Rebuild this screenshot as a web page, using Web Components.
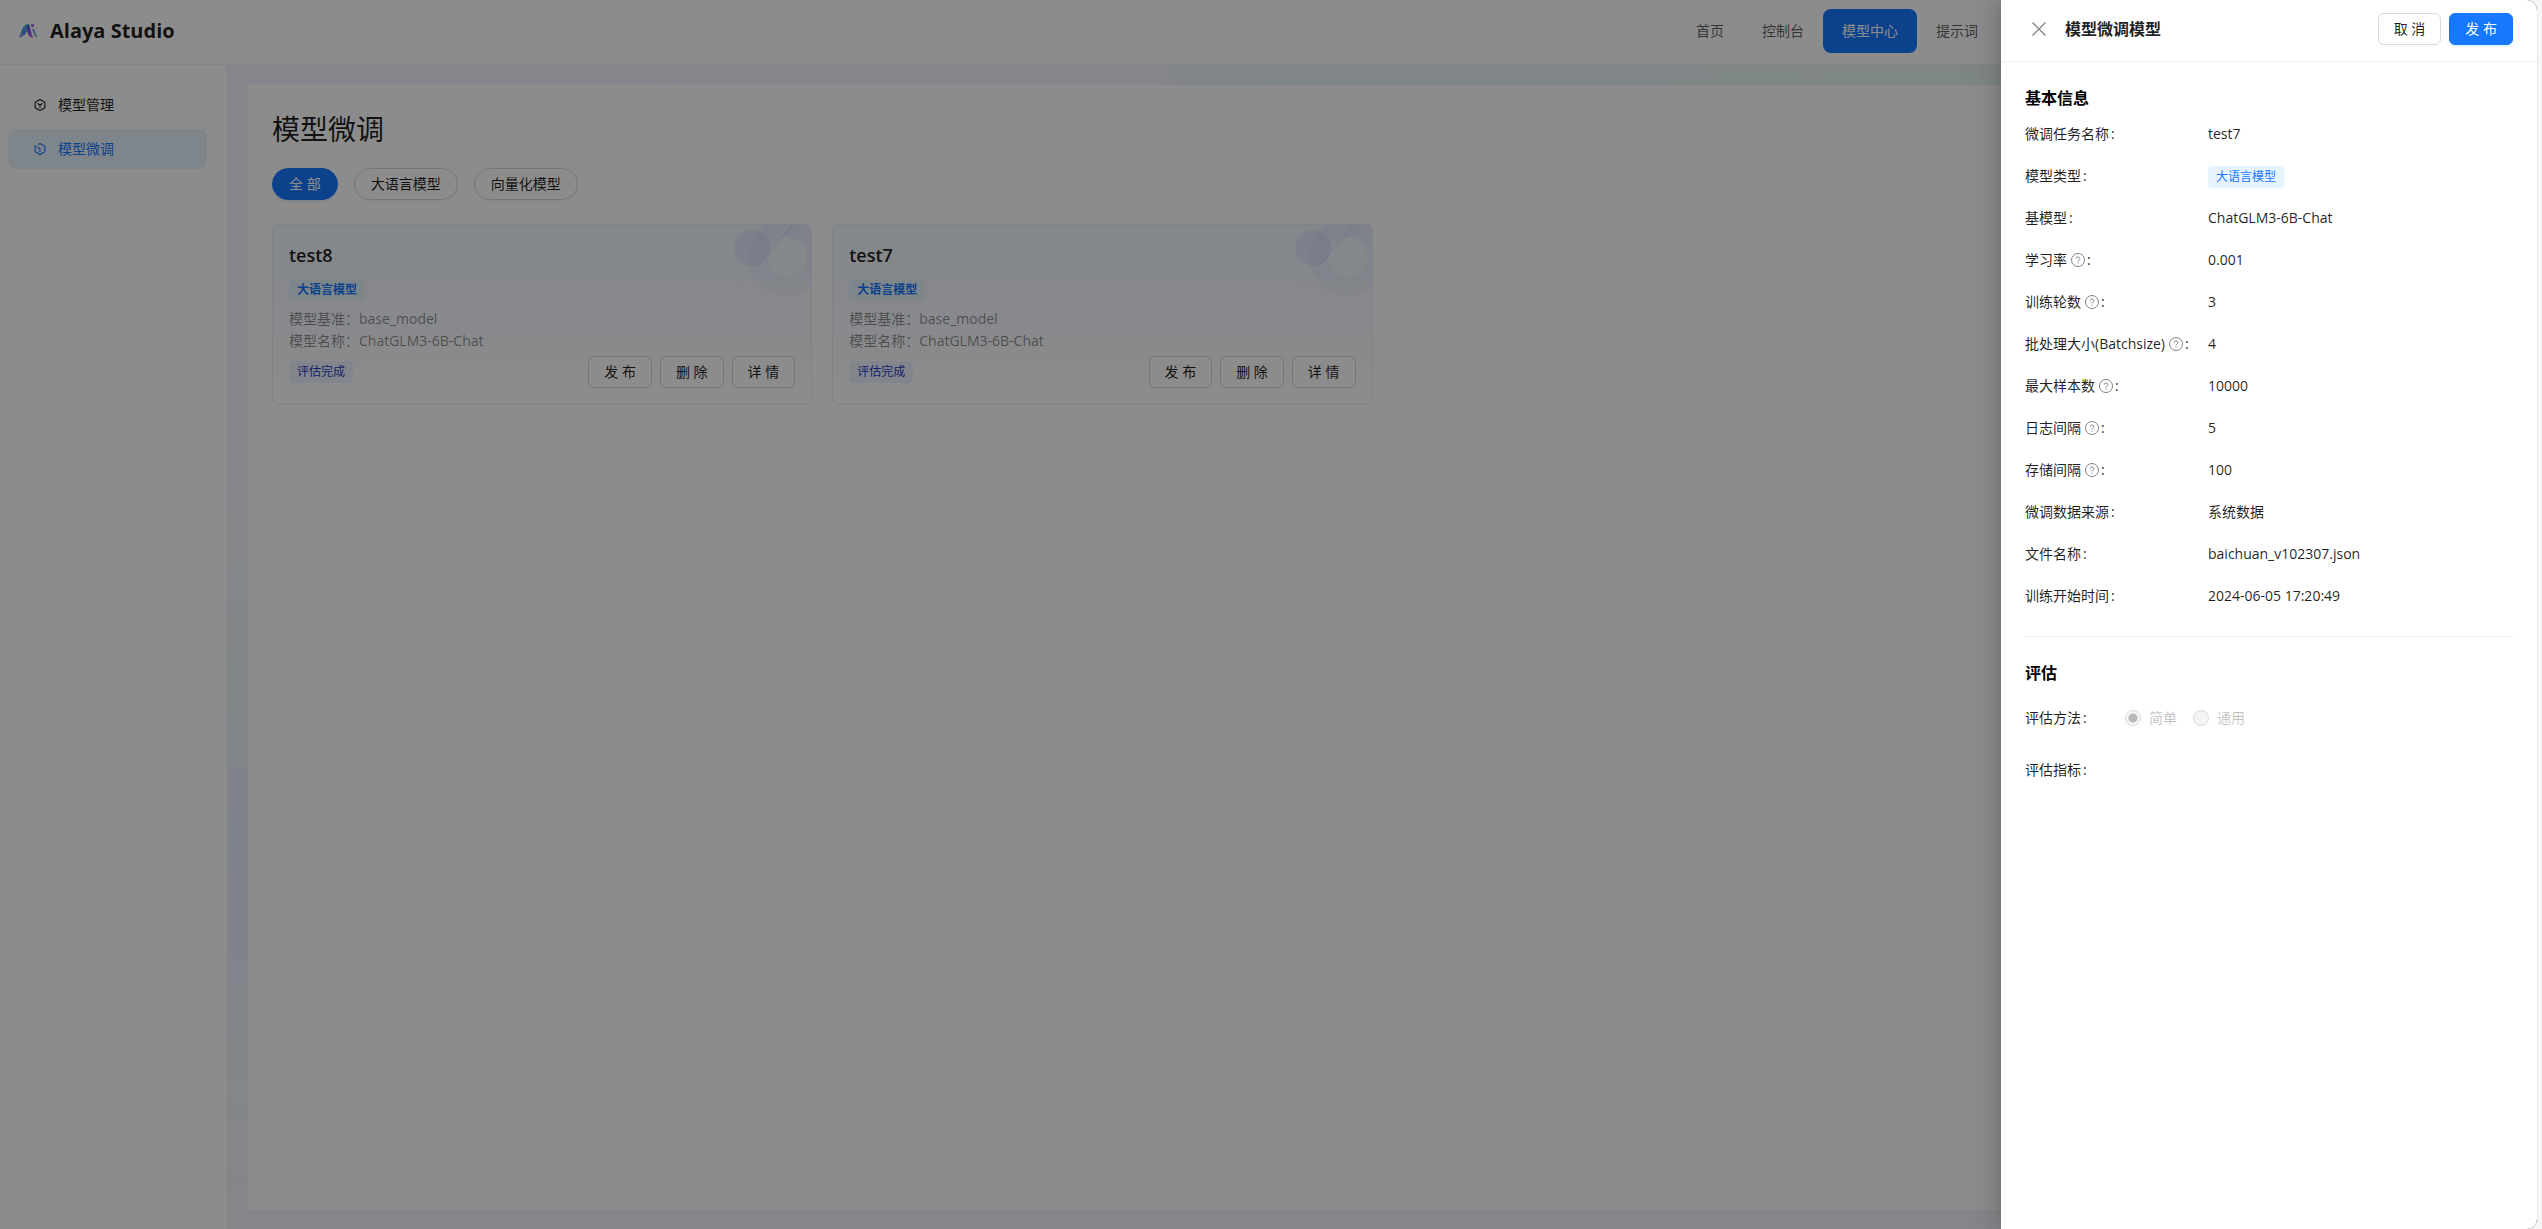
<!DOCTYPE html>
<html lang="zh-CN">
<head>
<meta charset="utf-8">
<title>Alaya Studio</title>
<style>
html,body{margin:0;height:100%}
body{font-family:"Open Sans","Noto Sans CJK SC",sans-serif;font-size:14px;line-height:22px;color:rgba(0,0,0,.88);background:#f7f7f7}
</style>
</head>
<body>
<alaya-app></alaya-app>
<script>
function define(name, html, setup){
  const t=document.createElement('template');
  t.innerHTML=html;
  customElements.define(name,class extends HTMLElement{
    constructor(){
      super();
      this.attachShadow({mode:'open'}).append(t.content.cloneNode(true));
    }
    connectedCallback(){ if(setup) setup(this,this.shadowRoot); }
  });
}

define('ui-button',`<style>
:host{display:block}
button{font:inherit;line-height:22px;height:32px;padding:0 15px;margin:0;display:block;white-space:nowrap;border:1px solid #d9d9d9;border-radius:6px;background:#fff;color:rgba(0,0,0,.88);box-shadow:0 2px 0 rgba(0,0,0,.02);box-sizing:border-box;cursor:pointer}
:host([round]) button{border-radius:16px;padding:0 16px}
:host([primary]) button{background:#1677ff;border-color:#1677ff;color:#fff;box-shadow:0 2px 0 rgba(5,145,255,.1)}
</style><button type="button"><slot></slot></button>`);

define('ui-tag',`<style>
:host{display:inline-block;font-size:12px;line-height:22px;padding:0 8px;border-radius:4px;background:#e6f4ff;color:#1677ff;white-space:nowrap}
:host([tone=indigo]){background:#edf2ff;color:#1d39c4}
:host([strong]){font-weight:600}
</style><slot></slot>`);

define('app-logo',`<style>
:host{display:flex;align-items:center;gap:12px;font-size:20px;line-height:28px;font-weight:700}
svg{display:block}
</style>
<svg width="20" height="16" viewBox="0 0 20 16" aria-hidden="true">
<defs>
<linearGradient id="a" x1="0" y1="1" x2="1" y2="0"><stop offset="0" stop-color="#9fb0f4"/><stop offset=".45" stop-color="#4a90e0"/><stop offset="1" stop-color="#68d0d4"/></linearGradient>
<linearGradient id="b" x1="0" y1="0" x2="1" y2="1"><stop offset="0" stop-color="#3a40e0"/><stop offset=".5" stop-color="#8a54e8"/><stop offset="1" stop-color="#e880ec"/></linearGradient>
<linearGradient id="c" x1="0" y1="0" x2="0" y2="1"><stop offset="0" stop-color="#6a78e4"/><stop offset="1" stop-color="#5cd0c8"/></linearGradient>
</defs>
<path d="M0 14.800C3 12.500 4 1 9.500 1h2.500C10.500 4 8.500 14.800 0 14.800z" fill="url(#a)"/>
<path d="M9.500 2C11.600 2 12 4.500 13 8.500s2 5 2.600 6.300c-4 .2-5.200-2.600-6-5.800S9.200 4.600 8.600 3.600z" fill="url(#b)"/>
<path d="M14.200 5.500C17.500 6 17.500 12 20 14.200 16 14.600 15.500 9.500 14.200 5.500z" fill="url(#c)"/>
<circle cx="14.500" cy="2.500" r="1.600" fill="#9458e0"/>
</svg><span>Alaya Studio</span>`);

define('app-header',`<style>
:host{display:flex;justify-content:space-between;align-items:center;background:#fff;border-bottom:1px solid #f0f0f0;padding:0 18px 2px;box-sizing:border-box;height:65px}
nav{display:flex;margin-right:522px}
a{display:block;padding:11px 19px;border-radius:8px;color:rgba(0,0,0,.65);text-decoration:none;white-space:nowrap}
a[aria-current]{background:#1677ff;color:#fff}
</style>
<app-logo></app-logo>
<nav><a href="#home">首页</a><a href="#console">控制台</a><a href="#models" aria-current="page">模型中心</a><a href="#prompts">提示词</a></nav>`);

define('side-menu',`<style>
:host{display:block;width:228px;flex:none;box-sizing:border-box;background:#fff;border-right:1px solid #f0f0f0;padding:20px 20px 0 8px}
nav{display:flex;flex-direction:column;gap:4px}
a{display:flex;align-items:center;gap:11px;height:40px;padding-left:25px;border-radius:8px;color:rgba(0,0,0,.88);text-decoration:none}
a[aria-current]{background:#e6f4ff;color:#1677ff}
svg{width:14px;height:14px;fill:none;stroke:currentColor;stroke-width:1.100;stroke-linejoin:round}
</style>
<nav>
<a href="#manage"><svg viewBox="0 0 14 14"><path d="M7 1.600 11.900 4.200V9.800L7 12.400 2.100 9.800V4.200zM4.500 5.600 7 7l2.500-1.400M7 7v2.800"/></svg>模型管理</a>
<a href="#tune" aria-current="page"><svg viewBox="0 0 14 14"><path d="M5.200 2.500 7 1.600 11.900 4.200V9.800L7 12.400 2.100 9.800V4.200l1.200-.6M4 5 6.900 6.600v3.600"/></svg>模型微调</a>
</nav>`);

define('model-card',`<style>
:host{display:block;box-sizing:border-box;border:1px solid #eaeef5;border-radius:6px;padding:16px;background:linear-gradient(180deg,#f0f7fc 0,#f5f8ff 40%,#fbfcff 75%,#fff 90%);position:relative;overflow:hidden}
.art{position:absolute;right:0;top:0}
h2{margin:0 0 10px;font-size:18px;line-height:28px;font-weight:600}
ui-tag{display:block;width:max-content}
dl{margin:7px 0 4px;color:rgba(0,0,0,.45)}
dl div{display:flex}
dt,dd{margin:0}
footer{display:flex;justify-content:space-between;align-items:center}
.acts{display:flex;gap:8px}
</style>
<svg class="art" width="84" height="84" viewBox="0 0 84 84" aria-hidden="true">
<defs><linearGradient id="l" x1="1" y1="0" x2="0" y2="1"><stop offset="0" stop-color="#c3cffa"/><stop offset="1" stop-color="#c3cffa" stop-opacity="0"/></linearGradient>
<linearGradient id="r" x1="0" y1="0" x2="0" y2="1"><stop offset="0" stop-color="#e2e8fc"/><stop offset="1" stop-color="#edf2fc"/></linearGradient></defs>
<path d="M60-7a39 39 0 1 0 .1 0zM60 12.500a19.500 19.500 0 1 1-.1 0z" fill="url(#r)" fill-opacity=".8" fill-rule="evenodd"/>
<circle cx="25" cy="23" r="18" fill="#d3dcfa" fill-opacity=".5"/>
<path d="M66 0 3 72" stroke="url(#l)"/>
</svg>
<h2></h2>
<ui-tag strong>大语言模型</ui-tag>
<dl><div><dt>模型基准：</dt><dd>base_model</dd></div><div><dt>模型名称：</dt><dd>ChatGLM3-6B-Chat</dd></div></dl>
<footer><ui-tag tone="indigo">评估完成</ui-tag><div class="acts"><ui-button>发 布</ui-button><ui-button>删 除</ui-button><ui-button>详 情</ui-button></div></footer>`,
(el,r)=>{r.querySelector('h2').textContent=el.getAttribute('name')});

define('tune-page',`<style>
:host{display:block;flex:1;padding:20px 20px 19px;background:linear-gradient(90deg,#f3f5fe 0,#f3f4fc 37%,#ebf4f8 46%,#eaf4f7 60%,#e6f6f2 72%,#e8f2f8 100%) top/100% 20px no-repeat,linear-gradient(180deg,#f3f5fe 0,#f3f5fd 35%,#ebf5f9 54%,#e8eefc 66%,#eaf0fc 76%,#eef6f9 88%,#f4f3fa 97%)}
section{height:100%;box-sizing:border-box;background:#fff;padding:24px}
h1{margin:0;font-size:28px;line-height:40px;font-weight:400}
.filters{display:flex;gap:16px;margin:19px 0 24px}
.grid{display:grid;grid-template-columns:repeat(4,1fr);gap:20px}
</style>
<section>
<h1>模型微调</h1>
<div class="filters"><ui-button round primary>全 部</ui-button><ui-button round>大语言模型</ui-button><ui-button round>向量化模型</ui-button></div>
<div class="grid"><model-card name="test8"></model-card><model-card name="test7"></model-card></div>
</section>`);

define('info-row',`<style>
:host{display:flex;align-items:center;height:22px;white-space:nowrap}
.label{display:flex;align-items:center;width:183px}
svg{display:none;margin-left:4px}
:host([help]) svg{display:block}
.c{margin-left:2px}
</style>
<span class="label"><span class="t"></span><svg width="14" height="14" viewBox="0 0 14 14" fill="none" stroke="#808080" aria-hidden="true"><circle cx="7" cy="7" r="6.500"/><path d="M5.200 5.700C5.200 3.400 8.900 3.500 8.900 5.600 8.900 7 7 6.900 7 8.500M7 9.600v1.100"/></svg><span class="c">:</span></span><span class="value"><slot></slot></span>`,
(el,r)=>{r.querySelector('.t').textContent=el.getAttribute('label')});

define('eval-method',`<style>
:host{display:block}
fieldset{border:0;margin:0;padding:0;display:flex;align-items:center;height:32px;gap:16px}
legend{float:left;padding:0;width:84px}
legend span{margin-left:2px}
label{display:flex;align-items:center;gap:8px;color:rgba(0,0,0,.25)}
input{appearance:none;width:16px;height:16px;margin:0;border:1px solid #d9d9d9;border-radius:50%;background:#f5f5f5}
input:checked{background:radial-gradient(circle,#b8b8b8 0 4px,#f5f5f5 5px)}
</style>
<fieldset><legend>评估方法<span>:</span></legend>
<label><input type="radio" name="m" checked disabled>简单</label>
<label><input type="radio" name="m" disabled>通用</label></fieldset>`);

define('detail-drawer',`<style>
:host{display:flex;flex-direction:column;width:536px;height:100%;box-sizing:border-box;background:#fff;border-radius:0 10px 10px 0;box-shadow:-6px 0 16px 0 rgba(0,0,0,.08),-3px 0 6px -4px rgba(0,0,0,.12),-9px 0 28px 8px rgba(0,0,0,.05)}
header{display:flex;align-items:center;height:62px;box-sizing:border-box;padding:0 24px 4px 30px;border-bottom:1px solid #f0f0f0}
.close{border:0;background:none;padding:0;margin:0 18px 0 0;width:16px;height:16px;color:#8c8c8c}
.close svg{display:block}
h2{margin:0;flex:1;font-size:16px;line-height:24px;font-weight:600}
.acts{display:flex;gap:8px}
.body{padding:24px}
h3{margin:0;font-size:16px;line-height:24px;font-weight:700;color:#000}
.rows{display:flex;flex-direction:column;gap:20px;margin:13px 0 24px;padding-bottom:29px;border-bottom:1px solid #f0f0f0}
.eval{display:flex;flex-direction:column;gap:20px;margin-top:17px}
.metric{line-height:32px}
.metric span{margin-left:2px}
</style>
<header><button class="close" type="button" aria-label="关闭"><svg width="16" height="16" viewBox="0 0 16 16" stroke="currentColor" stroke-width="1.500"><path d="M1.500 1.500l13 13M14.500 1.500l-13 13"/></svg></button>
<h2>模型微调模型</h2><div class="acts"><ui-button>取 消</ui-button><ui-button primary>发 布</ui-button></div></header>
<div class="body">
<h3>基本信息</h3>
<div class="rows">
<info-row label="微调任务名称">test7</info-row>
<info-row label="模型类型"><ui-tag>大语言模型</ui-tag></info-row>
<info-row label="基模型">ChatGLM3-6B-Chat</info-row>
<info-row label="学习率" help>0.001</info-row>
<info-row label="训练轮数" help>3</info-row>
<info-row label="批处理大小(Batchsize)" help>4</info-row>
<info-row label="最大样本数" help>10000</info-row>
<info-row label="日志间隔" help>5</info-row>
<info-row label="存储间隔" help>100</info-row>
<info-row label="微调数据来源">系统数据</info-row>
<info-row label="文件名称">baichuan_v102307.json</info-row>
<info-row label="训练开始时间">2024-06-05 17:20:49</info-row>
</div>
<h3>评估</h3>
<div class="eval"><eval-method></eval-method><div class="metric">评估指标<span>:</span></div></div>
</div>`);

define('alaya-app',`<style>
:host{display:block;height:100vh;padding-right:5px;box-sizing:border-box}
.frame{position:relative;height:100%;display:flex;flex-direction:column;border-radius:0 10px 10px 0;overflow:hidden;box-shadow:0 0 2px rgba(0,0,0,.2)}
.main{flex:1;display:flex;min-height:0}
.mask{position:absolute;inset:0;background:rgba(0,0,0,.45);display:flex;justify-content:flex-end}
</style>
<div class="frame">
<app-header></app-header>
<div class="main"><side-menu></side-menu><tune-page></tune-page></div>
<div class="mask"><detail-drawer></detail-drawer></div>
</div>`);
</script>
</body>
</html>
